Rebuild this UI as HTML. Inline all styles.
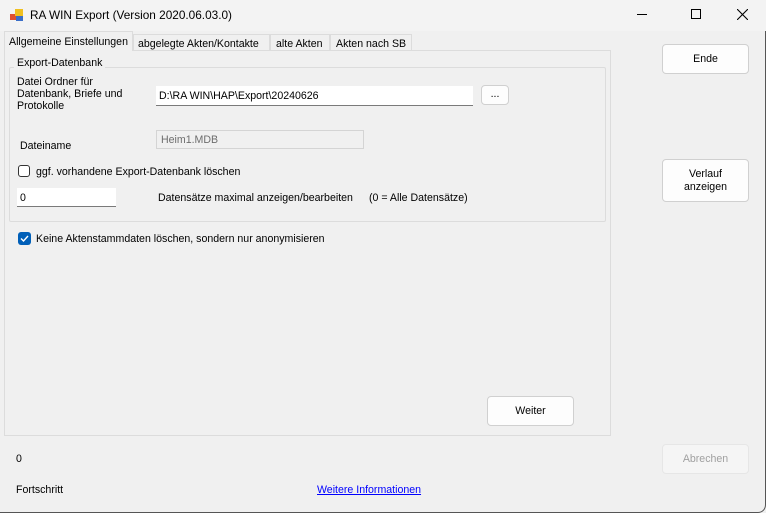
<!DOCTYPE html>
<html><head><style>
body{margin:0;width:766px;height:513px;background:#f0f0f0;font-family:"Liberation Sans",sans-serif;font-size:10.6px;color:#000;position:relative;overflow:hidden}
.a{position:absolute;white-space:nowrap}
.btn{position:absolute;background:#fdfdfd;border:1px solid #d0d0d0;border-radius:4px;text-align:center;box-sizing:border-box}
.tb{position:absolute;background:#fff;border-bottom:1px solid #7a7a7a;box-sizing:border-box;padding:4px 3px 0}
</style></head><body>
<div class="a" style="left:0;top:0;width:766px;height:513px;box-sizing:border-box;border:1px solid #555;border-top:none;border-left:none;border-radius:0 0 8px 0"></div>
<div class="a" style="left:0;top:0;width:766px;height:31px;background:#f3f3f3"></div>
<svg class="a" style="left:10px;top:8px" width="14" height="14"><rect x="0" y="6" width="6" height="6" fill="#e05030"/><rect x="5" y="1" width="8" height="7" fill="#f0c020"/><rect x="6" y="8" width="7" height="5" fill="#3a6ec8"/></svg>
<div class="a" style="left:30px;top:8px;font-size:11.8px">RA WIN Export (Version 2020.06.03.0)</div>
<div class="a" style="left:637px;top:14px;width:10px;height:1px;background:#000"></div>
<div class="a" style="left:691px;top:9px;width:8px;height:8px;border:1px solid #000"></div>
<svg class="a" style="left:737px;top:9px" width="11" height="11"><path d="M0 0L11 11M11 0L0 11" stroke="#000" stroke-width="1.1"/></svg>
<div class="a" style="left:4px;top:50px;width:607px;height:386px;border:1px solid #dcdcdc;box-sizing:border-box;background:#f0f0f0"></div>
<div class="a" style="left:4px;top:31px;width:129px;height:20px;background:#f0f0f0;border:1px solid #dcdcdc;border-bottom:none;box-sizing:border-box"></div>
<div class="a" style="left:9px;top:36px">Allgemeine Einstellungen</div>
<div class="a" style="left:133px;top:34px;width:137px;height:16px;border:1px solid #dcdcdc;border-bottom:none;box-sizing:border-box"></div>
<div class="a" style="left:138px;top:38px">abgelegte Akten/Kontakte</div>
<div class="a" style="left:270px;top:34px;width:60px;height:16px;border:1px solid #dcdcdc;border-bottom:none;box-sizing:border-box"></div>
<div class="a" style="left:276px;top:38px">alte Akten</div>
<div class="a" style="left:330px;top:34px;width:82px;height:16px;border:1px solid #dcdcdc;border-bottom:none;box-sizing:border-box"></div>
<div class="a" style="left:336px;top:38px">Akten nach SB</div>
<div class="a" style="left:9px;top:67px;width:597px;height:155px;border:1px solid #dcdcdc;box-sizing:border-box;border-radius:2px"></div>
<div class="a" style="left:14px;top:57px;background:#f0f0f0;padding:0 3px">Export-Datenbank</div>
<div class="a" style="left:17px;top:76px;line-height:12px;white-space:normal;width:120px">Datei Ordner für<br>Datenbank, Briefe und<br>Protokolle</div>
<div class="tb" style="left:156px;top:86px;width:317px;height:20px">D:\RA WIN\HAP\Export\20240626</div>
<div class="btn" style="left:481px;top:85px;width:28px;height:20px;line-height:16px">...</div>
<div class="a" style="left:20px;top:140px">Dateiname</div>
<div class="a" style="left:156px;top:130px;width:208px;height:19px;border:1px solid #d4d4d4;box-sizing:border-box;color:#6d6d6d;padding:3px 4px">Heim1.MDB</div>
<div class="a" style="left:18px;top:165px;width:12px;height:12px;border:1px solid #333;border-radius:3px;box-sizing:border-box;background:#fff"></div>
<div class="a" style="left:36px;top:166px">ggf. vorhandene Export-Datenbank löschen</div>
<div class="tb" style="left:17px;top:188px;width:99px;height:19px">0</div>
<div class="a" style="left:158px;top:192px">Datensätze maximal anzeigen/bearbeiten</div>
<div class="a" style="left:369px;top:192px">(0 = Alle Datensätze)</div>
<div class="a" style="left:18px;top:232px;width:13px;height:13px;background:#005fb8;border-radius:3px"></div>
<svg class="a" style="left:18px;top:232px" width="13" height="13"><path d="M3 6.5L5.5 9L10 4" stroke="#fff" stroke-width="1.4" fill="none"/></svg>
<div class="a" style="left:36px;top:233px">Keine Aktenstammdaten löschen, sondern nur anonymisieren</div>
<div class="btn" style="left:487px;top:396px;width:87px;height:30px;line-height:28px">Weiter</div>
<div class="btn" style="left:662px;top:44px;width:87px;height:30px;line-height:28px">Ende</div>
<div class="btn" style="left:662px;top:159px;width:87px;height:43px;line-height:13px;padding-top:8px">Verlauf<br>anzeigen</div>
<div class="btn" style="left:662px;top:444px;width:87px;height:30px;line-height:28px;color:#a0a0a0;background:#f5f5f5;border-color:#e6e6e6">Abrechen</div>
<div class="a" style="left:16px;top:453px">0</div>
<div class="a" style="left:16px;top:484px">Fortschritt</div>
<div class="a" style="left:317px;top:484px;color:#0000ff;text-decoration:underline">Weitere Informationen</div>
</body></html>
